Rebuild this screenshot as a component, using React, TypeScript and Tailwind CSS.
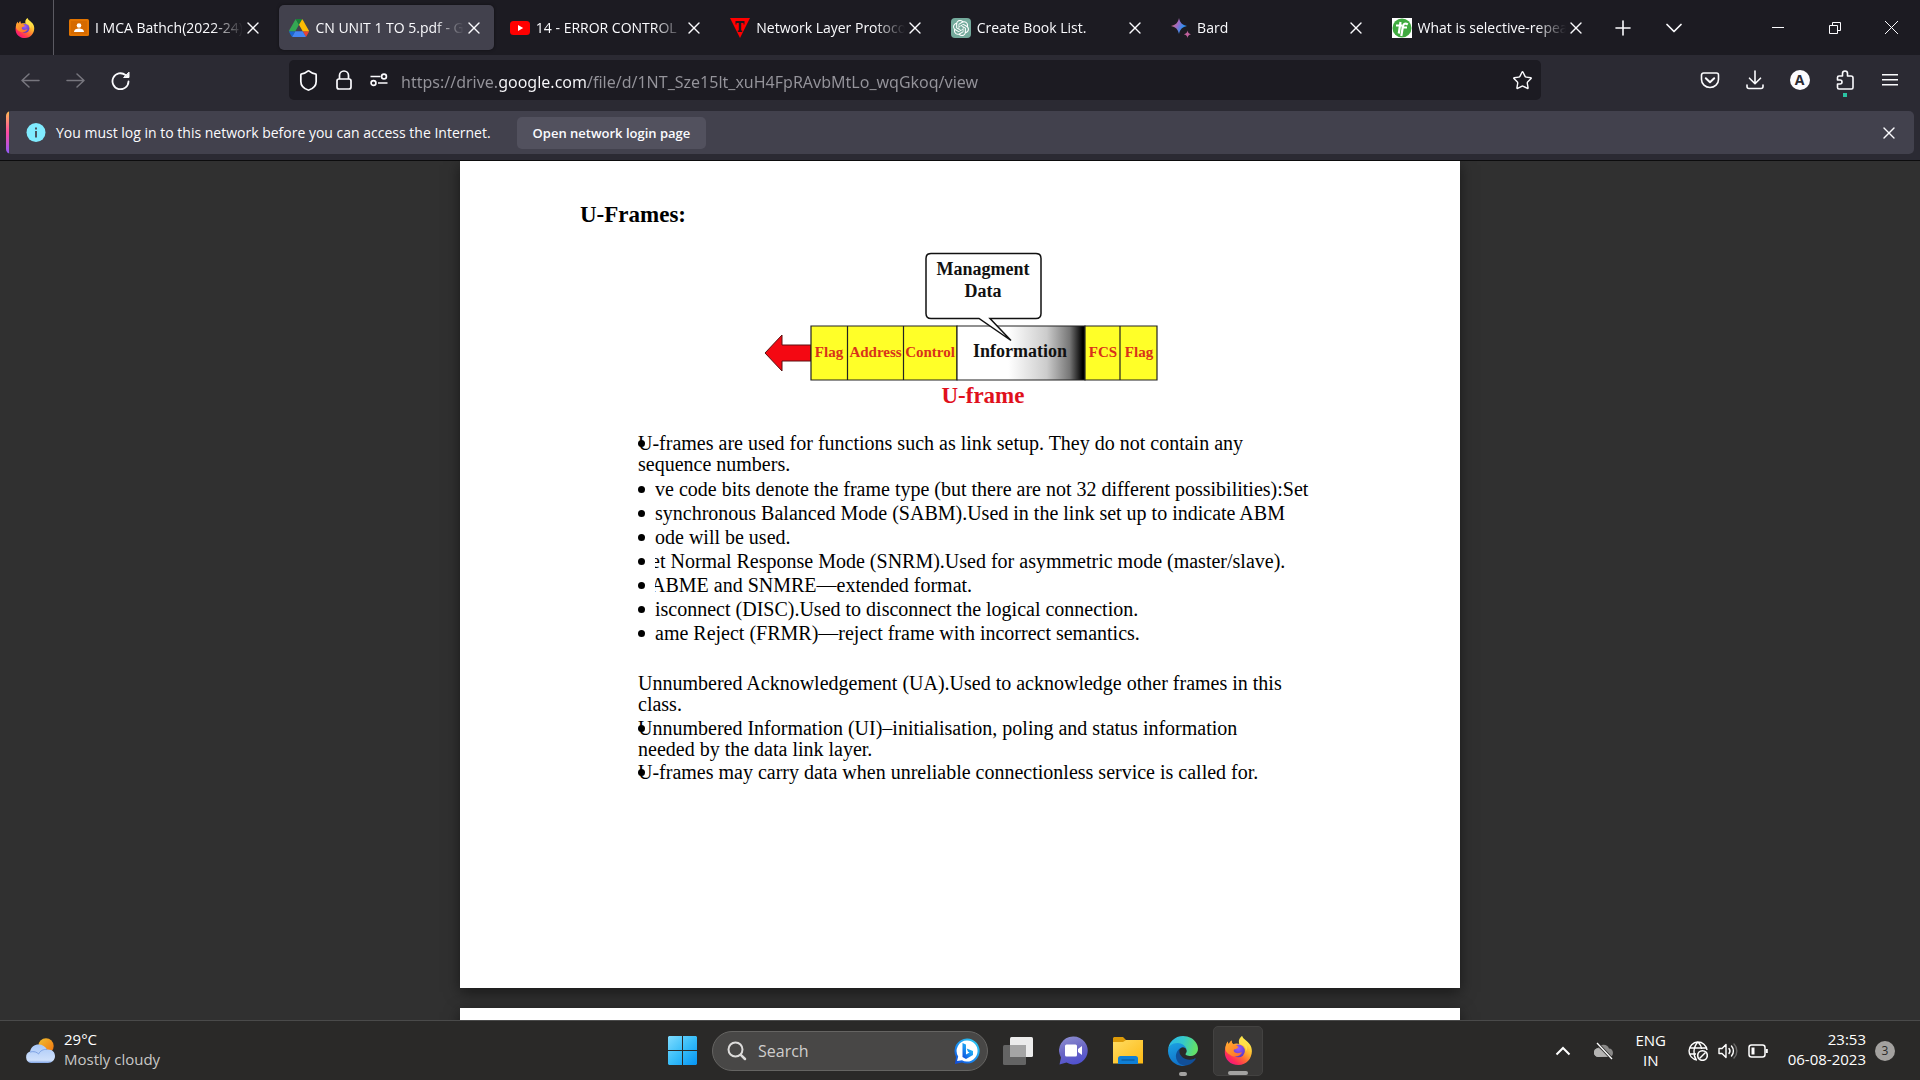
import React from "react";
import { ChevronDown, Plus, Shield, Star, X } from "lucide-react";
import { SiOpenai } from "react-icons/si";

function FirefoxLogo({ id, className }: { id: string; className: string }) {
  return (
    <svg viewBox="0 0 32 32" className={className} aria-hidden="true">
      <defs>
        <linearGradient id={id + "a"} x1="0.85" y1="0.1" x2="0.2" y2="0.95">
          <stop offset="0.05" stopColor="#fff44f" />
          <stop offset="0.35" stopColor="#ffb52e" />
          <stop offset="0.6" stopColor="#ff6a35" />
          <stop offset="0.85" stopColor="#ff2a5b" />
          <stop offset="1" stopColor="#f01880" />
        </linearGradient>
        <radialGradient id={id + "b"} cx="0.5" cy="0.3" r="0.7">
          <stop offset="0" stopColor="#9a5cf5" />
          <stop offset="1" stopColor="#5638c8" />
        </radialGradient>
        <linearGradient id={id + "c"} x1="0" y1="0" x2="1" y2="1">
          <stop offset="0" stopColor="#ffb02e" />
          <stop offset="1" stopColor="#ff6b2b" />
        </linearGradient>
      </defs>
      <path
        d="M20 0c1 4 8 6 10 12 3 9-3 20-14 20C6 32 0 25 1 16 1.300 11 3 8 4 6l1 3c1-1 2-3 3.500-4 0 2 .5 3 1.500 4 2-1 5-1 8 0-1-4 0-7 2-9z"
        fill={"url(#" + id + "a)"}
      />
      <circle cx="16" cy="16.500" r="7" fill={"url(#" + id + "b)"} />
      <path
        d="M1.500 13C2 10 3 8 4 6l1 3c1-1 2-3 3.500-4 0 2 .5 3 1.500 4 2 0 4 1 6 3-1 2-3 2-5 3-1 2 1 4 4 4 2 0 4-1 5-1-2 5-9 6-13 3-4-2-6-5-5.500-8z"
        fill={"url(#" + id + "c)"}
      />
      <path d="M17 9c4 0 8 3 7 8 3-4 1-9-2-11-2-1-3-3-2-6-4 3-4 6-3 9z" fill="#ffe04a" />
    </svg>
  );
}

function DriveLogo() {
  return (
    <svg viewBox="0 0 87.300 78" className="h-[18px] w-5" aria-hidden="true">
      <path d="M6.600 66.850l3.850 6.650c.8 1.400 1.950 2.500 3.300 3.300l13.750-23.800H0c0 1.550.4 3.100 1.200 4.500z" fill="#1967d2" />
      <path d="M43.650 25L29.900 1.200c-1.350.8-2.500 1.900-3.300 3.300l-25.400 44A9.060 9.060 0 0 0 0 53h27.500z" fill="#34a853" />
      <path d="M73.550 76.800c1.350-.8 2.500-1.900 3.300-3.300l1.600-2.750 7.650-13.250c.8-1.400 1.200-2.950 1.200-4.500H59.800l5.850 11.500z" fill="#ea4335" />
      <path d="M43.650 25L57.400 1.200C56.050.4 54.500 0 52.900 0H34.400c-1.600 0-3.150.45-4.500 1.200z" fill="#188038" />
      <path d="M59.800 53H27.500L13.750 76.800c1.350.8 2.900 1.200 4.500 1.200h50.800c1.600 0 3.150-.45 4.500-1.200z" fill="#4285f4" />
      <path d="M73.400 26.500l-12.700-22c-.8-1.400-1.950-2.500-3.300-3.300L43.650 25 59.800 53h27.450c0-1.550-.4-3.100-1.200-4.500z" fill="#fbbc04" />
    </svg>
  );
}

function ClassroomLogo() {
  return (
    <svg viewBox="0 0 20 20" className="size-5" aria-hidden="true">
      <rect y="1" width="20" height="17" rx="1.500" fill="#e37400" />
      <rect x="2" y="3" width="16" height="13" fill="#d56a00" />
      <circle cx="10" cy="7.500" r="2.300" fill="#fff" />
      <path d="M5 14c0-2.500 2.500-3.600 5-3.600s5 1.100 5 3.600z" fill="#fff" />
    </svg>
  );
}

function YoutubeLogo() {
  return (
    <svg viewBox="0 0 20 20" className="size-5" aria-hidden="true">
      <rect y="3" width="20" height="14" rx="3.500" fill="#f00" />
      <path d="M8 7l5.200 3L8 13z" fill="#fff" />
    </svg>
  );
}

function TriangleLogo() {
  return (
    <svg viewBox="0 0 20 20" className="size-5" aria-hidden="true">
      <path d="M0 0h20L10 20z" fill="#f00" />
      <path d="M5.500 3h9v3.500h-1V5h-2.300v7.500h1V14H7.800v-1.500h1V5H6.500v1.500h-1z" fill="#1c1b22" />
    </svg>
  );
}

function ChatLogo() {
  return (
    <span className="flex size-5 items-center justify-center rounded-sm bg-[#74aa9c] text-white">
      <SiOpenai size={16} />
    </span>
  );
}

function BardLogo() {
  return (
    <svg viewBox="0 0 20 20" className="size-5" aria-hidden="true">
      <defs>
        <linearGradient id="bard" x1="0" y1="0.200" x2="1" y2="0.700">
          <stop offset="0" stopColor="#e8705a" />
          <stop offset="0.400" stopColor="#a06ac4" />
          <stop offset="0.750" stopColor="#2f8ff0" />
        </linearGradient>
      </defs>
      <path d="M8 0c.8 4.500 3.500 7.200 8 8-4.500.8-7.200 3.500-8 8-.8-4.500-3.500-7.200-8-8 4.500-.8 7.200-3.500 8-8z" fill="url(#bard)" />
      <path d="M16.500 12.500c.4 2.200 1.400 3.200 3.500 3.700-2.100.5-3.100 1.500-3.500 3.800-.4-2.300-1.400-3.300-3.700-3.800 2.300-.5 3.300-1.500 3.700-3.700z" fill="#c0619c" />
    </svg>
  );
}

function TechLogo() {
  return (
    <svg viewBox="0 0 20 20" className="size-5" aria-hidden="true">
      <rect width="20" height="20" fill="#fff" />
      <circle cx="10" cy="10" r="9.500" fill="#3faa3f" />
      <path d="M8.500 4L6.800 15.500M4 7.500h6M15.800 6.500c-3-2-4.600-.5-5 2.500L9.300 18M9.500 9.500h5.500" fill="none" stroke="#fff" strokeWidth="2.200" />
    </svg>
  );
}

function EdgeLogo() {
  return (
    <svg viewBox="0 0 256 256" className="size-[30px]" aria-hidden="true">
      <defs>
        <linearGradient id="edgeA" x1="0" y1="0" x2="1" y2="0.200">
          <stop offset="0" stopColor="#27b6f0" />
          <stop offset="0.550" stopColor="#36c9c8" />
          <stop offset="1" stopColor="#62e06a" />
        </linearGradient>
        <linearGradient id="edgeB" x1="0.300" y1="0" x2="0.600" y2="1">
          <stop offset="0" stopColor="#1ba0e2" />
          <stop offset="1" stopColor="#0f6fc8" />
        </linearGradient>
      </defs>
      <path
        d="M231 190.500c-3.400 1.800-6.900 3.400-10.500 4.700a101 101 0 0 1-35.600 6.400c-47 0-88-32.300-88-73.800.1-11.500 6.400-21.900 16.300-27.600-42.500 1.800-53.400 46.100-53.400 72 0 73.400 67.600 80.800 82.200 80.800 7.800 0 19.600-2.300 26.700-4.500l1.300-.4a128 128 0 0 0 66.600-52.800 4 4 0 0 0-5.600-4.800z"
        fill="#114f98"
      />
      <path
        d="M105.700 241.400a79.200 79.200 0 0 1-22.700-21.400 80.700 80.700 0 0 1 29.500-120c3.200-1.500 8.500-4.100 15.600-4a32.400 32.400 0 0 1 25.700 13 31.900 31.900 0 0 1 6.300 18.700c0-.2 24.500-79.600-80-79.600-43.900 0-80 41.700-80 78.200a130.200 130.200 0 0 0 12.100 56 128 128 0 0 0 156.400 67 75.500 75.500 0 0 1-62.800-8z"
        fill="url(#edgeB)"
      />
      <path
        d="M152.300 148.900c-.9 1-3.400 2.500-3.400 5.600 0 2.600 1.700 5.200 4.800 7.300 14.300 10 41.400 8.600 41.500 8.600a59.600 59.600 0 0 0 30.300-8.300 61.400 61.400 0 0 0 30.400-52.900c.3-22.400-8-37.300-11.300-43.900C223.500 23.900 177.700 0 128 0A128 128 0 0 0 0 126.200c.5-36.500 36.800-66 80-66 3.500 0 23.500.3 42 10.100 16.300 8.600 24.900 18.900 30.800 29.200 6.200 10.700 7.300 24.100 7.300 29.500s-2.700 13.300-7.800 19.900z"
        fill="url(#edgeA)"
      />
    </svg>
  );
}

const tabs = [
  { title: "I MCA Bathch(2022-24)", icon: <ClassroomLogo /> },
  { title: "CN UNIT 1 TO 5.pdf - G", icon: <DriveLogo />, active: true },
  { title: "14 - ERROR CONTROL", icon: <YoutubeLogo /> },
  { title: "Network Layer Protoco", icon: <TriangleLogo /> },
  { title: "Create Book List.", icon: <ChatLogo /> },
  { title: "Bard", icon: <BardLogo /> },
  { title: "What is selective-repea", icon: <TechLogo /> },
];

function TabBar() {
  return (
    <div className="flex h-[55px] shrink-0 items-stretch bg-[#1c1b22]">
      <div className="flex w-[54px] items-center justify-center border-r border-[#5b5a62] pr-1">
        <FirefoxLogo id="ffTab" className="size-5" />
      </div>
      <div role="tablist" className="flex min-w-0 flex-1 pl-[2px]">
        {tabs.map((tab) => (
          <div key={tab.title} className="flex min-w-0 flex-1 px-[3px] py-[5px]">
            <div
              className={
                "flex min-w-0 flex-1 items-center rounded-[5px] px-[10px] pt-px " +
                (tab.active ? "bg-[#42414d] shadow-[0_0_3px_rgba(0,0,0,0.5)]" : "")
              }
            >
              <button role="tab" aria-selected={!!tab.active} className="flex min-w-0 flex-1 items-center gap-[6px] text-left">
                <span className="shrink-0">{tab.icon}</span>
                <span className="flex-1 overflow-hidden whitespace-nowrap text-[14px] leading-5 [mask-image:linear-gradient(to_left,transparent,black_30px)]">
                  {tab.title}
                </span>
              </button>
              <button aria-label="Close tab" className="flex size-5 shrink-0 items-center justify-center">
                <X size={20} strokeWidth={1.6} />
              </button>
            </div>
          </div>
        ))}
      </div>
      <div className="flex w-[321px] shrink-0">
        <button aria-label="New tab" className="flex w-12 items-center justify-center">
          <Plus size={24} strokeWidth={1.6} />
        </button>
        <button aria-label="List all tabs" className="flex w-[54px] items-center justify-center">
          <ChevronDown size={28} strokeWidth={1.5} />
        </button>
        <div className="ml-auto flex">
          <button aria-label="Minimize" className="flex w-[57px] items-center justify-center">
            <svg viewBox="0 0 12 12" className="size-3" aria-hidden="true">
              <path d="M0 5.500h12" stroke="currentColor" />
            </svg>
          </button>
          <button aria-label="Restore" className="flex w-[57px] items-center justify-center">
            <svg viewBox="0 0 12 12" className="size-3" fill="none" stroke="currentColor" aria-hidden="true">
              <path d="M.5 3.500h8v8h-8zM3.500 3V.5h8v8H9" />
            </svg>
          </button>
          <button aria-label="Close" className="flex w-[57px] items-center justify-center">
            <svg viewBox="0 0 13 13" className="size-[13px]" fill="none" stroke="currentColor" aria-hidden="true">
              <path d="M0 0l13 13M13 0L0 13" />
            </svg>
          </button>
        </div>
      </div>
    </div>
  );
}

function ToolButton({ label, children, dim }: { label: string; children: React.ReactNode; dim?: boolean }) {
  return (
    <button
      aria-label={label}
      className={"flex h-10 w-[45px] shrink-0 items-center justify-center " + (dim ? "text-[#77767e]" : "text-[#fbfbfe]")}
    >
      {children}
    </button>
  );
}

function NavBar() {
  return (
    <div className="flex h-[50px] shrink-0 items-center bg-[#2b2a33] px-2">
      <ToolButton label="Back" dim>
        <svg viewBox="0 0 20 20" className="size-5" fill="none" stroke="currentColor" strokeWidth="1.500" strokeLinecap="round" strokeLinejoin="round" aria-hidden="true">
          <path d="M18 10.500H1M8 4L1 10.500 8 17" />
        </svg>
      </ToolButton>
      <ToolButton label="Forward" dim>
        <svg viewBox="0 0 20 20" className="size-5" fill="none" stroke="currentColor" strokeWidth="1.500" strokeLinecap="round" strokeLinejoin="round" aria-hidden="true">
          <path d="M1 10.500h17M11 4l7 6.500-7 6.500" />
        </svg>
      </ToolButton>
      <ToolButton label="Reload">
        <svg viewBox="0 0 20 20" className="size-5" fill="none" stroke="currentColor" strokeWidth="1.800" strokeLinecap="round" aria-hidden="true">
          <path d="M17.500 11.500a8 8 0 1 1-3-6.500" />
          <path d="M18 2.500v5h-5z" fill="currentColor" strokeWidth="1" strokeLinejoin="round" />
        </svg>
      </ToolButton>
      <div className="mx-[146px] flex h-10 min-w-0 flex-1 items-center rounded-[5px] bg-[#1c1b22] pl-[2px] pr-px">
        <button aria-label="Tracking protection" className="flex w-[35px] shrink-0 justify-center">
          <Shield size={23} strokeWidth={1.8} />
        </button>
        <button aria-label="Connection secure" className="flex w-[35px] shrink-0 justify-center">
          <svg viewBox="0 0 20 20" className="size-5" fill="none" stroke="currentColor" strokeWidth="1.700" aria-hidden="true">
            <rect x="3" y="9" width="14" height="10" rx="2" />
            <path d="M5.500 9V5.500a4.500 4.500 0 0 1 9 0V9" />
          </svg>
        </button>
        <button aria-label="Site permissions" className="flex w-[35px] shrink-0 justify-center">
          <svg viewBox="0 0 20 20" className="size-5" fill="none" stroke="currentColor" strokeWidth="1.700" aria-hidden="true">
            <path d="M1.500 6.500h10M9 13h9.500" />
            <circle cx="15" cy="6.500" r="2.400" />
            <circle cx="4.500" cy="13" r="2.400" />
          </svg>
        </button>
        <input
          aria-label="Search or enter address"
          defaultValue="https://drive.google.com/file/d/1NT_Sze15lt_xuH4FpRAvbMtLo_wqGkoq/view"
          className="ml-[5px] min-w-0 flex-1 bg-[linear-gradient(to_right,#95949b_97px,#fbfbfe_97px,#fbfbfe_187px,#95949b_187px)] bg-clip-text pt-[3px] font-['Noto_Sans',sans-serif] text-[16px] leading-6 text-transparent outline-none"
        />
        <button aria-label="Bookmark this page" className="flex w-9 shrink-0 justify-center">
          <Star size={21} strokeWidth={1.6} />
        </button>
      </div>
      <ToolButton label="Save to Pocket">
        <svg viewBox="0 0 20 20" className="size-5" fill="none" stroke="currentColor" strokeWidth="1.600" strokeLinecap="round" strokeLinejoin="round" aria-hidden="true">
          <path d="M3.500 3h13A2 2 0 0 1 18.500 5v4.500a8.500 8 0 0 1-17 0V5a2 2 0 0 1 2-2z" />
          <path d="M5.800 8.200l4.200 4 4.200-4" strokeWidth="2" />
        </svg>
      </ToolButton>
      <ToolButton label="Downloads">
        <svg viewBox="0 0 20 20" className="size-5" fill="none" stroke="currentColor" strokeWidth="1.600" strokeLinecap="round" strokeLinejoin="round" aria-hidden="true">
          <path d="M10 1v12.500M4.500 8.200l5.500 5.500 5.500-5.500M2 15v1.500a2 2 0 0 0 2 2h12a2 2 0 0 0 2-2V15" />
        </svg>
      </ToolButton>
      <ToolButton label="Account">
        <span className="flex size-5 items-center justify-center rounded-full bg-[#fbfbfe] text-[14px] font-bold leading-5 text-[#2b2a33]">
          A
        </span>
      </ToolButton>
      <ToolButton label="Extensions">
        <span className="relative flex">
          <svg viewBox="0 0 20 20" className="size-5" fill="none" stroke="currentColor" strokeWidth="1.600" strokeLinejoin="round" aria-hidden="true">
            <path d="M2.500 10V7.500A1.500 1.500 0 0 1 4 6h3.500V3.500a2.500 2.500 0 0 1 5 0V6H16a2 2 0 0 1 2 2v9.500a1.500 1.500 0 0 1-1.500 1.500H4a1.500 1.500 0 0 1-1.500-1.500V14H5a2 2 0 0 0 0-4z" />
          </svg>
          <span className="absolute left-2 top-[23px] size-1 bg-[#2ac3a2]" />
        </span>
      </ToolButton>
      <ToolButton label="Open application menu">
        <svg viewBox="0 0 16 16" className="size-4" stroke="currentColor" strokeWidth="1.500" aria-hidden="true">
          <path d="M0 2.750h16M0 7.750h16M0 12.750h16" />
        </svg>
      </ToolButton>
    </div>
  );
}

function NotificationBar() {
  return (
    <div className="shrink-0 border-b border-[#0c0c0d] bg-[#2b2a33] px-[6px] py-[6px]">
      <div className="flex h-[43px] items-center overflow-hidden rounded-[5px] bg-[#42414d]">
        <span className="h-full w-[3px] bg-[linear-gradient(to_bottom,#ffbd4f,#ff4aa2_50%,#9059ff)]" />
        <svg viewBox="0 0 20 20" className="ml-[17px] size-5 shrink-0" aria-hidden="true">
          <circle cx="10" cy="9.500" r="9.500" fill="#80ebff" />
          <path d="M10 4.500v2M10 8v6.500" stroke="#42414d" strokeWidth="1.800" />
        </svg>
        <span className="ml-[10px] text-[14px] leading-5">
          You must log in to this network before you can access the Internet.
        </span>
        <button className="ml-[26px] h-8 rounded-[5px] bg-[#52515e] px-4 text-[13px] font-semibold leading-5">
          Open network login page
        </button>
        <button aria-label="Dismiss" className="ml-auto mr-[15px] flex size-5 items-center justify-center">
          <X size={20} strokeWidth={1.6} />
        </button>
      </div>
    </div>
  );
}

function FrameDiagram() {
  return (
    <svg
      viewBox="764 250 396 160"
      className="ml-[304px] mt-[20px] block h-[160px] w-[396px]"
      fontFamily="'Liberation Serif', serif"
      fontWeight="700"
      textAnchor="middle"
      role="img"
      aria-label="U-frame layout"
    >
      <defs>
        <linearGradient id="info" x1="0" x2="1" y1="0" y2="0">
          <stop offset="0.400" stopColor="#fff" />
          <stop offset="0.700" stopColor="#ccc" />
          <stop offset="0.880" stopColor="#777" />
          <stop offset="0.980" stopColor="#000" />
        </linearGradient>
      </defs>
      <path d="M765 353l17-18v10h29v16h-29v10z" fill="#f40812" stroke="#5a1010" />
      <g stroke="#222" strokeWidth="1.200">
        <path d="M811 326h146v54H811z" fill="#ffff28" />
        <path d="M957 326h128v54H957z" fill="url(#info)" />
        <path d="M1085 326h72v54h-72z" fill="#ffff28" />
        <path d="M847.500 326v54M903.500 326v54M1120 326v54" />
      </g>
      <path
        d="M931 253.500h105q5 0 5 5v55q0 5-5 5h-46l21 22-32-22h-48q-5 0-5-5v-55q0-5 5-5z"
        fill="#fff"
        stroke="#111"
        strokeWidth="1.500"
      />
      <g fill="#d8321a" fontSize="15">
        <text x="829" y="357">Flag</text>
        <text x="875.500" y="357">Address</text>
        <text x="930" y="357">Control</text>
        <text x="1103" y="357">FCS</text>
        <text x="1139" y="357">Flag</text>
      </g>
      <g fill="#111" fontSize="18">
        <text x="983" y="275">Managment</text>
        <text x="983" y="297">Data</text>
        <text x="1020" y="357">Information</text>
      </g>
      <text x="983" y="403" fill="#e0101c" fontSize="23">
        U-frame
      </text>
    </svg>
  );
}

const frameTypes = [
  { text: "ve code bits denote the frame type (but there are not 32 different possibilities):Set" },
  { text: "synchronous Balanced Mode (SABM).Used in the link set up to indicate ABM" },
  { text: "ode will be used." },
  { text: "et Normal Response Mode (SNRM).Used for asymmetric mode (master/slave).", cut: true },
  { text: "ABME and SNMRE—extended format.", cut: true },
  { text: "isconnect (DISC).Used to disconnect the logical connection." },
  { text: "ame Reject (FRMR)—reject frame with incorrect semantics." },
];

function OverlapItem({ children }: { children: React.ReactNode }) {
  return (
    <li className="relative mb-0.5 leading-[21px]">
      <span className="absolute left-0 top-[7px] size-[7px] rounded-full bg-black" />
      {children}
    </li>
  );
}

function PdfPage() {
  return (
    <article className="h-[827px] shrink-0 bg-white px-[120px] pt-[40px] font-['Liberation_Serif',serif] text-black shadow-[0_4px_14px_rgba(0,0,0,0.5)]">
      <h1 className="text-[23px] font-bold leading-7">U-Frames:</h1>
      <div className="-ml-[120px] pt-px">
        <FrameDiagram />
      </div>
      <div className="ml-[58px] mt-[23px] text-[20px]">
        <ul>
          <OverlapItem>
            U-frames are used for functions such as link setup. They do not contain any
            <br />
            sequence numbers.
          </OverlapItem>
          {frameTypes.map((item) => (
            <li key={item.text} className="flex h-6 items-center leading-6">
              <span className="relative z-10 flex h-5 w-[17px] shrink-0 items-center bg-white">
                <span className="size-[7px] rounded-full bg-black" />
              </span>
              <span className={"whitespace-nowrap " + (item.cut ? "-ml-1" : "")}>{item.text}</span>
            </li>
          ))}
        </ul>
        <p className="mb-[3px] mt-[28px] leading-[21px]">
          Unnumbered Acknowledgement (UA).Used to acknowledge other frames in this
          <br />
          class.
        </p>
        <ul>
          <OverlapItem>
            Unnumbered Information (UI)–initialisation, poling and status information
            <br />
            needed by the data link layer.
          </OverlapItem>
          <OverlapItem>U-frames may carry data when unreliable connectionless service is called for.</OverlapItem>
        </ul>
      </div>
    </article>
  );
}

function TaskTile({ label, active, mark, children }: { label: string; active?: boolean; mark?: string; children: React.ReactNode }) {
  return (
    <button
      aria-label={label}
      className={
        "relative flex size-[50px] shrink-0 items-center justify-center rounded-[5px] " +
        (active ? "border border-[#434241] bg-[#393837]" : "")
      }
    >
      {children}
      {mark && <span className={"absolute bottom-0 h-1 rounded-full bg-[#a3a2a1] " + mark} />}
    </button>
  );
}

function Taskbar() {
  return (
    <footer className="flex h-[60px] shrink-0 items-center border-t border-[#4a4a4a] bg-[#2a2928]">
      <div className="flex flex-1 items-center gap-[9px] pl-[25px]">
        <svg viewBox="0 0 30 26" className="h-[26px] w-[30px]" aria-hidden="true">
          <defs>
            <linearGradient id="sun" x1="0" y1="0" x2="1" y2="1">
              <stop offset="0" stopColor="#f0c030" />
              <stop offset="1" stopColor="#f2700c" />
            </linearGradient>
            <linearGradient id="cloud" x1="0" y1="0" x2="0" y2="1">
              <stop offset="0" stopColor="#a9c8f8" />
              <stop offset="0.850" stopColor="#cfe0fb" />
              <stop offset="1" stopColor="#7fa4e6" />
            </linearGradient>
          </defs>
          <circle cx="21" cy="8" r="7.700" fill="url(#sun)" />
          <path d="M6 25a6 6 0 0 1-1-11.500C6 9 9.500 6.500 13.500 6.500c4 0 7 2 8.500 5 5-.5 8 2.500 8 6.500s-3 7-7 7z" fill="url(#cloud)" />
          <path d="M5 14c4-1 7 0 8.500 2 2-3.500 5-5 8.500-4.500" fill="none" stroke="#7ea2e4" strokeWidth="1" />
        </svg>
        <div className="flex flex-col pb-1 text-[15px] leading-5">
          <span className="text-white">29°C</span>
          <span className="text-[#c8c7c6]">Mostly cloudy</span>
        </div>
      </div>
      <div className="flex items-center gap-[5px]">
        <TaskTile label="Start">
          <svg viewBox="0 0 29 29" className="size-[29px]" aria-hidden="true">
            <defs>
              <linearGradient id="win" gradientUnits="userSpaceOnUse" x1="0" y1="0" x2="29" y2="29">
                <stop offset="0" stopColor="#7fdcff" />
                <stop offset="0.500" stopColor="#38bdf8" />
                <stop offset="1" stopColor="#0594f4" />
              </linearGradient>
            </defs>
            <path d="M1 0h13v14H0V1zM15 0h13l1 1v13H15zM0 15h14v14H1l-1-1zM15 15h14v13l-1 1H15z" fill="url(#win)" />
          </svg>
        </TaskTile>
        <label className="flex h-10 w-[276px] items-center rounded-full border border-[#656462] bg-[#484746] pl-[14px] pr-[7px]">
          <svg viewBox="0 0 20 20" className="size-5 shrink-0" fill="none" stroke="#dddcdb" strokeWidth="2" strokeLinecap="round" aria-hidden="true">
            <circle cx="8.500" cy="8.500" r="7" />
            <path d="M13.800 13.800L18 18" strokeWidth="2.500" />
          </svg>
          <input
            aria-label="Search"
            placeholder="Search"
            className="ml-[11px] min-w-0 flex-1 bg-transparent text-[16px] leading-6 outline-none placeholder:text-[#cfcecd]"
          />
          <svg viewBox="0 0 26 26" className="size-[26px] shrink-0" aria-hidden="true">
            <defs>
              <linearGradient id="bing" x1="0" y1="1" x2="0.800" y2="0">
                <stop offset="0" stopColor="#0f45d8" />
                <stop offset="0.500" stopColor="#1a8ff0" />
                <stop offset="1" stopColor="#30c8f0" />
              </linearGradient>
            </defs>
            <path d="M13 .5a12.500 12.500 0 1 1-5 23.900L1 26l1-7A12.500 12.500 0 0 1 13 .5z" fill="url(#bing)" />
            <path d="M13 2.500A10.500 10.500 0 1 1 8 22.200L3 23l1.200-4.500A10.500 10.500 0 0 1 13 2.500z" fill="#fff" />
            <path d="M8.500 5l3.500 1.500v10l3.500-2-1.500-.8-1.300-3.200 6.300 2.500v4L12 21l-3.500-2z" fill="url(#bing)" />
          </svg>
        </label>
        <TaskTile label="Task view">
          <svg viewBox="0 0 30 28" className="h-7 w-[30px]" aria-hidden="true">
            <rect x="0" y="8" width="23" height="20" rx="1.500" fill="#646464" />
            <rect x="7" y="0" width="23" height="20" rx="1.500" fill="#ececec" />
            <path d="M7 8h16v12H7z" fill="#a5a5a5" />
          </svg>
        </TaskTile>
        <TaskTile label="Chat">
          <svg viewBox="0 0 29 29" className="size-[29px]" aria-hidden="true">
            <defs>
              <linearGradient id="teams" x1="0.300" y1="0" x2="0.600" y2="1">
                <stop offset="0" stopColor="#8a8bd0" />
                <stop offset="0.500" stopColor="#6a66c4" />
                <stop offset="1" stopColor="#4f50d0" />
              </linearGradient>
            </defs>
            <path d="M14.500.5a14 14 0 1 1-7 26L.5 28.500l1.500-7A14 14 0 0 1 14.500.5z" fill="url(#teams)" />
            <rect x="6" y="8.500" width="12" height="12" rx="1.500" fill="#fff" />
            <path d="M19 13l4-3v9l-4-3z" fill="#fff" />
          </svg>
        </TaskTile>
        <TaskTile label="File Explorer">
          <svg viewBox="0 0 30 27" className="h-[27px] w-[30px]" aria-hidden="true">
            <defs>
              <linearGradient id="folder" x1="0" y1="0" x2="1" y2="1">
                <stop offset="0" stopColor="#ffdc62" />
                <stop offset="1" stopColor="#fdb913" />
              </linearGradient>
            </defs>
            <path d="M1 0h9l3 3v4H0V1z" fill="#dc9a08" />
            <path d="M0 5h10l3-2h17v23.500H0z" fill="url(#folder)" />
            <path d="M5 27v-5.500A2.500 2.500 0 0 1 7.500 19h15a2.500 2.500 0 0 1 2.500 2.500V27z" fill="#0f7fd6" />
            <path d="M8.500 23h13" stroke="#0b5a9c" strokeWidth="1.300" />
          </svg>
        </TaskTile>
        <TaskTile label="Edge" mark="w-2">
          <EdgeLogo />
        </TaskTile>
        <TaskTile label="Firefox" active mark="w-5">
          <FirefoxLogo id="ffTask" className="size-[29px]" />
        </TaskTile>
      </div>
      <div className="flex flex-1 items-center justify-end pr-[25px] text-[15px] leading-5 text-white">
        <button aria-label="Show hidden icons" className="mr-[23px]">
          <svg viewBox="0 0 16 10" className="h-[10px] w-4" fill="none" stroke="currentColor" strokeWidth="2" aria-hidden="true">
            <path d="M1.500 8.500L8 2l6.500 6.500" />
          </svg>
        </button>
        <svg viewBox="0 0 20 18" className="mr-[21px] h-[18px] w-5" aria-hidden="true">
          <path d="M4.500 15a4.500 4.500 0 0 1-.3-9A6 6 0 0 1 15 6.500a4.300 4.300 0 0 1 .5 8.500z" fill="#8a8988" />
          <path d="M4.500 15a4.500 4.500 0 0 1-.3-9l13 8.500z" fill="#b5b4b3" />
          <path d="M3 1l15 16" stroke="#2a2928" strokeWidth="3" />
          <path d="M3 1l15 16" stroke="#fff" strokeWidth="1.300" />
        </svg>
        <button className="mr-[21px] flex w-8 flex-col items-center pb-[2px]">
          <span>ENG</span>
          <span>IN</span>
        </button>
        <button aria-label="Network, volume and battery" className="mr-[20px] flex gap-[10px]">
          <svg viewBox="0 0 20 20" className="size-5" fill="none" stroke="currentColor" strokeWidth="1.400" aria-hidden="true">
            <path d="M9 19A9 9 0 1 1 19 9M1.500 7h17M1.500 13H8M8 18.500C5 14 5 6 10 1c2.500 2.500 3.500 5 3.700 7" />
            <circle cx="14.500" cy="14.500" r="4.800" strokeWidth="1.600" />
            <path d="M11.500 17.500l6-6" />
          </svg>
          <svg viewBox="0 0 20 20" className="size-5" fill="none" stroke="currentColor" strokeWidth="1.400" strokeLinejoin="round" strokeLinecap="round" aria-hidden="true">
            <path d="M1 7.500h3L8 3.500v13L4 12.500H1z" />
            <path d="M11 7.500a4 4 0 0 1 0 5M13.500 5a7.500 7.500 0 0 1 0 10" />
            <path d="M16 3a10 10 0 0 1 0 14" stroke="#6b6a69" />
          </svg>
          <svg viewBox="0 0 20 20" className="size-5" fill="none" stroke="currentColor" strokeWidth="1.500" aria-hidden="true">
            <rect x="1" y="4" width="16" height="12" rx="2.500" />
            <path d="M3.500 6.500h3v7h-3z" fill="currentColor" stroke="none" />
            <path d="M18.800 8v4" strokeWidth="2" />
          </svg>
        </button>
        <div className="mr-[9px] flex flex-col pb-1 text-right">
          <span>23:53</span>
          <span>06-08-2023</span>
        </div>
        <span className="flex size-5 items-center justify-center rounded-full bg-[#a3a19f] text-[12px] leading-5 text-[#2a2928]">3</span>
      </div>
    </footer>
  );
}

export default function App() {
  return (
    <div className="flex h-screen flex-col overflow-hidden bg-[#303030] font-['Open_Sans','Noto_Sans',sans-serif] text-[#fbfbfe]">
      <TabBar />
      <NavBar />
      <NotificationBar />
      <main className="flex min-h-0 flex-1 justify-center overflow-hidden bg-[#303030]">
        <div className="flex w-[1000px] flex-col gap-5">
          <PdfPage />
          <div className="h-[827px] shrink-0 bg-white shadow-[0_4px_14px_rgba(0,0,0,0.5)]" />
        </div>
      </main>
      <Taskbar />
    </div>
  );
}
